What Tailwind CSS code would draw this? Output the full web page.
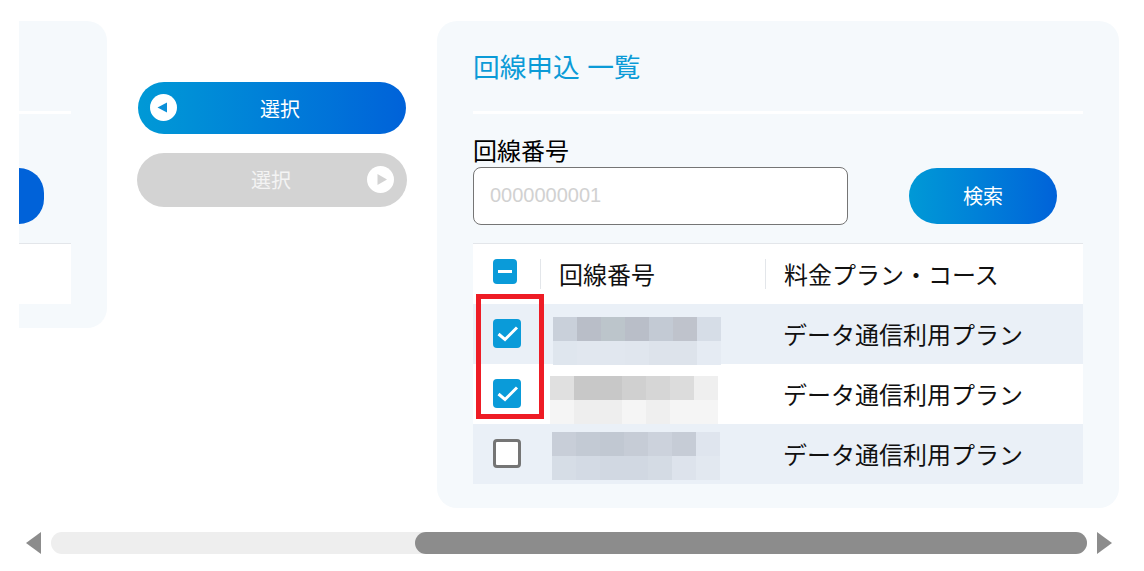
<!DOCTYPE html>
<html lang="ja">
<head>
  <meta charset="UTF-8" />
  <title>回線申込 一覧</title>
  <script src="https://cdn.jsdelivr.net/npm/@tailwindcss/browser@4"></script>
</head>
<body class="bg-white text-[#111] font-['Liberation_Sans','Noto_Sans_CJK_JP',sans-serif] h-[571px] overflow-hidden">

  <div class="flex pl-[19px] pt-[21px]">
    <!-- clipped left card -->
    <div class="w-[88px] h-[307px] shrink-0 bg-[#f5f9fc] rounded-r-[20px] pr-[36px] pt-[90px]">
      <div class="h-[3px] bg-white"></div>
      <div class="w-[25px] h-[56px] mt-[54px] bg-[#0062d9] rounded-r-[28px]"></div>
      <div class="h-[61px] mt-[19px] bg-white border-t border-[#e3e6ea]"></div>
    </div>

    <!-- move buttons -->
    <div class="w-[270px] ml-[30px] pt-[61px] shrink-0">
      <button class="relative block w-[268px] h-[52px] ml-px pl-[16px] pt-[3px] rounded-full bg-gradient-to-r from-[#0099d6] to-[#0062d9] text-white text-[20px]">
        選択
        <span class="absolute left-[12px] top-[12px] w-[27px] h-[27px] rounded-full bg-white flex items-center justify-center">
          <svg width="27" height="27" viewBox="0 0 27 27"><polygon points="7.5,13.5 17,8.5 17,18.5" fill="#0a8fd8"/></svg>
        </span>
      </button>
      <button class="relative block w-[270px] h-[54px] mt-[19px] pr-[2px] pt-[2px] rounded-full bg-[#d3d3d3] text-[#f4f4f4] text-[20px]">
        選択
        <span class="absolute right-[13px] top-[13px] w-[27px] h-[27px] rounded-full bg-white flex items-center justify-center">
          <svg width="27" height="27" viewBox="0 0 27 27"><polygon points="10.5,8 10.5,19 20,13.5" fill="#d3d3d3"/></svg>
        </span>
      </button>
    </div>

    <!-- main card -->
    <div class="w-[682px] h-[487px] ml-[30px] shrink-0 bg-[#f5f9fc] rounded-[20px] px-[36px] pt-[26px]">
      <h2 class="text-[26.7px] leading-[42px] text-[#0b9bd7]">回線申込 一覧</h2>
      <div class="h-[3px] mt-[22px] bg-white"></div>

      <label class="block mt-[23px] text-[24px] leading-[30px] text-black">回線番号</label>
      <div class="flex items-center">
        <input type="text" placeholder="0000000001" class="w-[375px] h-[58px] px-[16px] pb-[2px] bg-white border border-[#757575] rounded-[8px] text-[20px] placeholder:text-[#d1d1d1]" />
        <button class="w-[148px] h-[56px] ml-[61px] pt-[1px] rounded-full bg-gradient-to-r from-[#0099d6] to-[#0062d9] text-white text-[20px]">検索</button>
      </div>

      <!-- table -->
      <div class="relative mt-[18px] text-[24px]">
        <div class="flex items-center h-[61px] bg-white border-t border-[#e3e6ea]">
          <div class="w-[68px] h-[30px] pl-[20px] border-r border-[#e3e6ea]">
            <span class="w-[24px] h-[25px] rounded-[4px] bg-[#0a9bd9] flex items-center justify-center">
              <span class="w-[14px] h-[3px] bg-white"></span>
            </span>
          </div>
          <div class="w-[225px] h-[30px] pl-[18px] pt-[4px] border-r border-[#e3e6ea] flex items-center">回線番号</div>
          <div class="pl-[18px] pt-[4px]">料金プラン・コース</div>
        </div>

        <div class="flex h-[60px] bg-[#eaf0f7]">
          <div class="w-[68px] pl-[20px] pt-[15px]">
            <span class="block w-[28px] h-[29px] rounded-[4px] bg-[#0a9bd9]">
              <svg width="28" height="29" viewBox="0 0 28 29"><polyline points="5.5,15 12,20.5 24,8.5" fill="none" stroke="white" stroke-width="3"/></svg>
            </span>
          </div>
          <div class="w-[242px] pl-[12px] pt-[13px]">
            <div class="grid grid-cols-7 w-[168px] h-[48px]">
              <div class="bg-[#c9d0da]"></div><div class="bg-[#b9bec8]"></div><div class="bg-[#bcc5cb]"></div><div class="bg-[#b9bec8]"></div><div class="bg-[#c3cad4]"></div><div class="bg-[#bfc3cc]"></div><div class="bg-[#d6dde7]"></div>
              <div class="bg-[#dfe6ee]"></div><div class="bg-[#e1e7ef]"></div><div class="bg-[#e1e7ef]"></div><div class="bg-[#e0e6ee]"></div><div class="bg-[#dde3eb]"></div><div class="bg-[#dde3eb]"></div><div class="bg-[#e5ebf3]"></div>
            </div>
          </div>
          <div class="leading-[64px]">データ通信利用プラン</div>
        </div>

        <div class="flex h-[60px] bg-white">
          <div class="w-[68px] pl-[20px] pt-[15px]">
            <span class="block w-[28px] h-[29px] rounded-[4px] bg-[#0a9bd9]">
              <svg width="28" height="29" viewBox="0 0 28 29"><polyline points="5.5,15 12,20.5 24,8.5" fill="none" stroke="white" stroke-width="3"/></svg>
            </span>
          </div>
          <div class="w-[242px] pl-[9px] pt-[12px]">
            <div class="grid grid-cols-7 w-[168px] h-[48px]">
              <div class="bg-[#e0e0e0]"></div><div class="bg-[#c8c8c8]"></div><div class="bg-[#c8c8c8]"></div><div class="bg-[#d0d0d0]"></div><div class="bg-[#d6d6d6]"></div><div class="bg-[#dcdcdc]"></div><div class="bg-[#efefef]"></div>
              <div class="bg-[#f5f5f5]"></div><div class="bg-[#eeeeee]"></div><div class="bg-[#eeeeee]"></div><div class="bg-[#f5f5f5]"></div><div class="bg-[#efefef]"></div><div class="bg-[#f5f5f5]"></div><div class="bg-[#f5f5f5]"></div>
            </div>
          </div>
          <div class="leading-[64px]">データ通信利用プラン</div>
        </div>

        <div class="flex h-[60px] bg-[#eaf0f7]">
          <div class="w-[68px] pl-[20px] pt-[15px]">
            <span class="block w-[28px] h-[29px] rounded-[4px] bg-white border-[3px] border-[#757575]"></span>
          </div>
          <div class="w-[242px] pl-[11px] pt-[8px]">
            <div class="grid grid-cols-7 w-[168px] h-[48px]">
              <div class="bg-[#c8ced8]"></div><div class="bg-[#c3cad4]"></div><div class="bg-[#c1c8d2]"></div><div class="bg-[#c6ccd6]"></div><div class="bg-[#ccd2dc]"></div><div class="bg-[#c6ccd6]"></div><div class="bg-[#dfe5ee]"></div>
              <div class="bg-[#d6dde6]"></div><div class="bg-[#d3dae4]"></div><div class="bg-[#d1d8e2]"></div><div class="bg-[#d1d8e2]"></div><div class="bg-[#d4dbe4]"></div><div class="bg-[#dde3ec]"></div><div class="bg-[#e2e8f0]"></div>
            </div>
          </div>
          <div class="leading-[64px]">データ通信利用プラン</div>
        </div>

        <!-- red highlight over the checked rows -->
        <div class="absolute left-[3px] top-[51px] w-[68px] h-[125px] border-[5px] border-[#ee1c25]"></div>
      </div>
    </div>
  </div>

  <!-- horizontal scrollbar -->
  <div class="flex items-center mt-[24px] pl-[26px]">
    <svg width="15" height="22" viewBox="0 0 15 22"><polygon points="0,11 15,0 15,22" fill="#8c8c8c"/></svg>
    <div class="w-[1036px] h-[22px] ml-[10px] rounded-full bg-[#eeeeee]">
      <div class="w-[672px] h-full ml-auto rounded-full bg-[#8c8c8c]"></div>
    </div>
    <svg class="ml-[10px]" width="15" height="22" viewBox="0 0 15 22"><polygon points="0,0 15,11 0,22" fill="#8c8c8c"/></svg>
  </div>

</body>
</html>
